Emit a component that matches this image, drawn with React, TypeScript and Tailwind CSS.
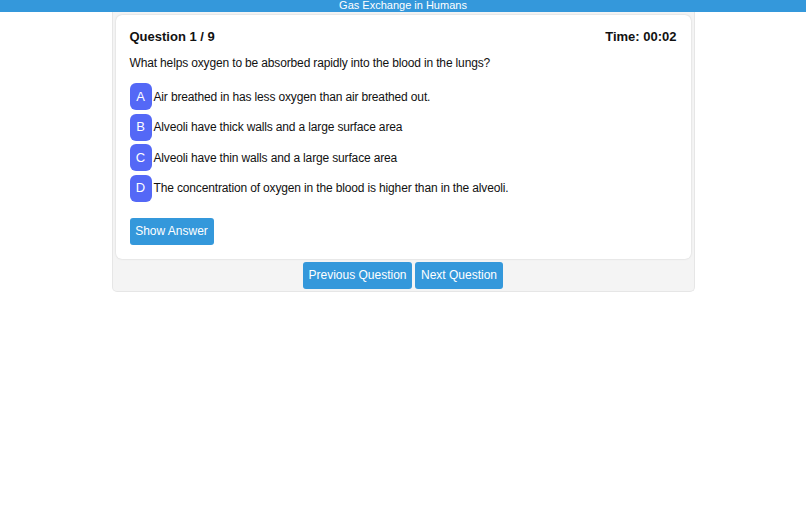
const OPTIONS = [
  { key: 'A', text: 'Air breathed in has less oxygen than air breathed out.' },
  { key: 'B', text: 'Alveoli have thick walls and a large surface area' },
  { key: 'C', text: 'Alveoli have thin walls and a large surface area' },
  { key: 'D', text: 'The concentration of oxygen in the blood is higher than in the alveoli.' },
];

export default function App() {
  return (
    <div className="min-h-[505px] bg-white font-['Liberation_Sans',Arial,sans-serif] text-[#111]">
      <div className="h-[12px] overflow-hidden bg-[#3498db] text-center text-[11px] leading-[10px] text-white">
        Gas Exchange in Humans
      </div>
      <div className="mx-auto w-[583px] rounded-b-[5px] border border-t-0 border-[#e6e6e6] bg-[#f4f4f4] px-[3px] pt-[3px] pb-[2px]">
        <div className="rounded-[6px] bg-white px-[14px] pt-[14px] pb-[14px] shadow-[0_0_2px_rgba(0,0,0,0.18)]">
          <div className="flex items-center justify-between text-[13px] leading-[16px] font-bold">
            <span>Question 1 / 9</span>
            <span>Time: 00:02</span>
          </div>
          <p className="mt-[10px] text-[12px] leading-[16px] tracking-[-0.15px]">
            What helps oxygen to be absorbed rapidly into the blood in the lungs?
          </p>
          <div className="mt-[12px] flex flex-col gap-[3.5px]">
            {OPTIONS.map((o) => (
              <div key={o.key} className="flex items-center text-[12px] tracking-[-0.15px]">
                <span className="flex h-[27px] w-[22px] items-center justify-center rounded-[6px] bg-[#5468f6] text-[13px] tracking-normal text-white">
                  {o.key}
                </span>
                <span className="ml-[2px]">{o.text}</span>
              </div>
            ))}
          </div>
          <button className="mt-[16px] h-[27px] w-[84px] rounded-[3px] bg-[#3498db] text-[12px] text-white">
            Show Answer
          </button>
        </div>
        <div className="mt-[3px] flex justify-center gap-[3px]">
          <button className="h-[27px] w-[109px] rounded-[3px] bg-[#3498db] text-[12px] text-white">
            Previous Question
          </button>
          <button className="h-[27px] w-[88px] rounded-[3px] bg-[#3498db] text-[12px] text-white">
            Next Question
          </button>
        </div>
      </div>
    </div>
  );
}
